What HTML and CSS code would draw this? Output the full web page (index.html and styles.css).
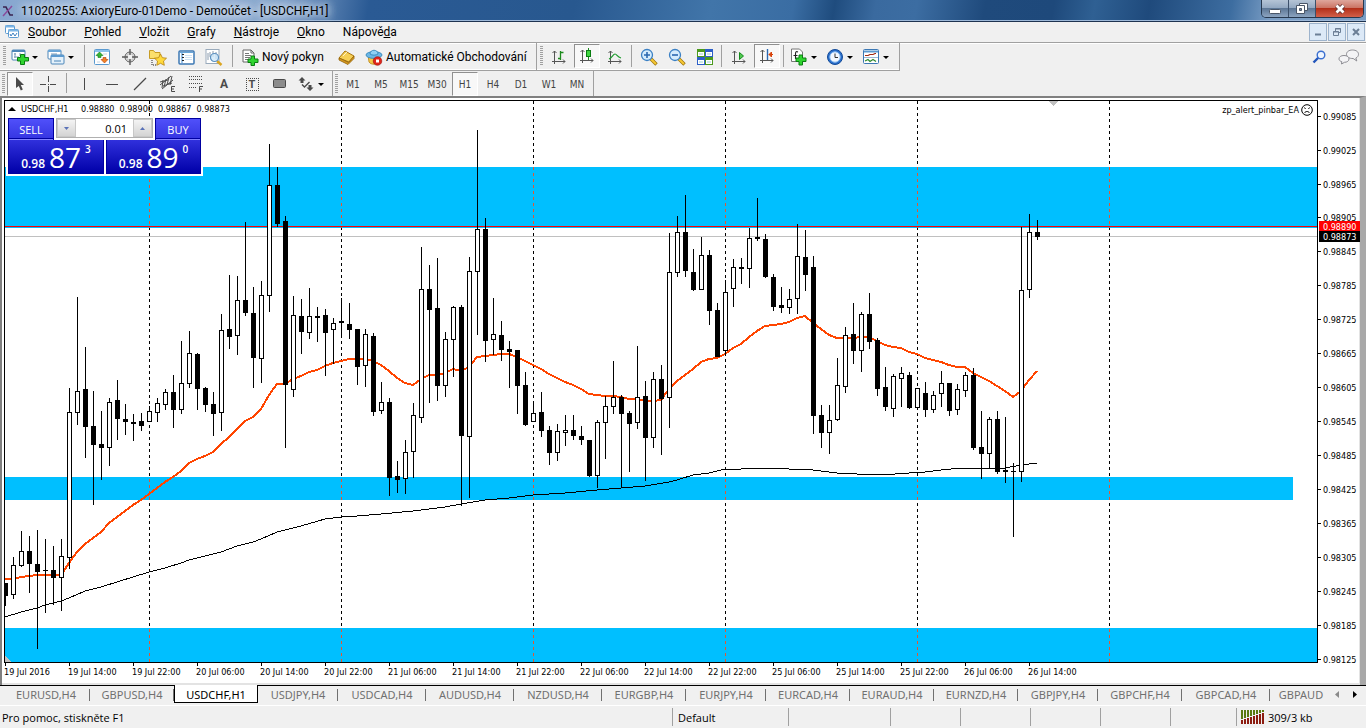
FILE: index.html
```
<!DOCTYPE html>
<html lang="cs">
<head>
    <meta charset="UTF-8">
    <meta name="viewport" content="width=device-width, initial-scale=1.0">
    <title>11020255: AxioryEuro-01Demo - Demoúčet - [USDCHF,H1]</title>
    <link rel="stylesheet" href="styles.css">
</head>
<body>
    <header class="title-bar">
        <svg class="app-logo" width="12" height="12" viewBox="0 0 12 12"><path d="M1 2h3l4 8h3" fill="none" stroke="#3a2350" stroke-width="1.6"/><path d="M10 1L1 11" stroke="#8a4a9a" stroke-width="1.4"/></svg>
        <h1>11020255: AxioryEuro-01Demo - Demoúčet - [USDCHF,H1]</h1>
        <div class="window-buttons">
            <button class="win-min" aria-label="Minimalizovat"><svg width="14" height="12" viewBox="0 0 14 12"><rect x="1.5" y="6.5" width="11" height="4" rx="1" fill="#fff" stroke="#4a5668"/></svg></button>
            <button class="win-max" aria-label="Obnovit"><svg width="14" height="13" viewBox="0 0 14 13"><path d="M4.5 1.5h8v7h-8z" fill="#fff" stroke="#4a5668"/><path d="M1.5 3.5h8v8h-8z" fill="#fff" stroke="#4a5668"/><path d="M4.5 6.5h2v2h-2z" fill="#7c8ea6" stroke="#4a5668"/></svg></button>
            <button class="win-close" aria-label="Zavřít"><svg width="14" height="12" viewBox="0 0 14 12"><path d="M3.5 2.5l7 7M10.5 2.5l-7 7" stroke="#5c3030" stroke-width="4.4"/><path d="M3.5 2.5l7 7M10.5 2.5l-7 7" stroke="#fff" stroke-width="2.8"/></svg></button>
        </div>
    </header>

    <nav class="menu-bar">
        <svg width="16" height="16" viewBox="0 0 16 16"><g fill="#fff" stroke="#5b9ad0"><rect x="1.5" y="1.5" width="9" height="8" rx="1"/><rect x="4.5" y="5.5" width="10" height="8" rx="1"/></g><path d="M1 2.5h9M4 6.500h10" stroke="#7ab4e4" stroke-width="2"/><path d="M6 10l1 2 2-3 2 3 2-3" fill="none" stroke="#3c7fc0"/></svg>
        <a href="#"><u>S</u>oubor</a>
        <a href="#"><u>P</u>ohled</a>
        <a href="#"><u>V</u>ložit</a>
        <a href="#"><u>G</u>rafy</a>
        <a href="#"><u>N</u>ástroje</a>
        <a href="#"><u>O</u>kno</a>
        <a href="#">Nápově<u>d</u>a</a>
        <div class="child-buttons">
            <button aria-label="Minimalizovat graf"><svg width="12" height="12"><path d="M3 8.500h6" stroke="#6c7f96" stroke-width="2"/></svg></button>
            <button aria-label="Obnovit graf"><svg width="12" height="12" fill="none" stroke="#6c7f96"><path d="M4.500 5V2.500h5v4H7M4 3h6M2.500 5.500h5v4h-5zM2 6h6"/></svg></button>
            <button aria-label="Zavřít graf"><svg width="12" height="12"><path d="M3 3l6 6M9 3l-6 6" stroke="#6c7f96" stroke-width="2"/></svg></button>
        </div>
    </nav>

    <div class="toolbar-row">
        <div class="toolbar">
            <span class="grip"></span>
            <button class="tool drop" aria-label="Nový graf"><svg width="18" height="16" viewBox="0 0 18 16"><rect x="1" y="1" width="13" height="10" rx="1" fill="#fff" stroke="#4d86b8"/><path d="M1 2h13" stroke="#4d86b8" stroke-width="2"/><path d="M4 4v5M3 5h2M9 4v3M3 8h5" stroke="#7a9bb8"/><path d="M9.500 8.500V5.500h4v3h4v3.500h-4v3.500h-4V12h-3V8.500z" fill="#2fd42f" stroke="#0a7d12"/></svg></button>
            <button class="tool drop" aria-label="Profily"><svg width="18" height="16" viewBox="0 0 18 16"><rect x="1" y="1" width="13" height="9" rx="1" fill="#fff" stroke="#4d86b8"/><path d="M1 2h13" stroke="#6aa6d8" stroke-width="2"/><path d="M4 5h6M4 7h5" stroke="#7a9bb8"/><rect x="4" y="6" width="13" height="9" rx="1" fill="#e4f1fb" stroke="#4d86b8"/><path d="M4 7h13" stroke="#5b9ad0" stroke-width="2"/><path d="M7 12h7" stroke="#4d86b8"/></svg></button>
            <span class="sep"></span>
            <button class="tool" aria-label="Sledování trhu"><svg width="16" height="16" viewBox="0 0 16 16"><rect x="0.5" y="0.5" width="15" height="15" rx="1" fill="#fff" stroke="#5b9ad0"/><path d="M1 2h14" stroke="#8cc3ec" stroke-width="2"/><path d="M3 7h3M9 5h4M3 13h3" stroke="#c8d4e0"/><path d="M5.500 3L9 6.500H7v2H4v-2H2z" fill="#35b535" stroke="#137a18" stroke-width=".6"/><path d="M10.500 14L14 10.500h-2v-2H9v2H7z" fill="#f08428" stroke="#b33a08" stroke-width=".6"/></svg></button>
            <button class="tool" aria-label="Okno dat"><svg width="16" height="16" viewBox="0 0 16 16" fill="none" stroke="#5a5a5a"><circle cx="8" cy="8" r="5"/><circle cx="8" cy="8" r="3.5" stroke="#bbb"/><path d="M8 0v6M8 10v6M0 8h6M10 8h6" stroke-width="1.4"/></svg></button>
            <button class="tool" aria-label="Navigátor"><svg width="18" height="17" viewBox="0 0 18 17"><path d="M0.500 1.500h4l1.500 2h5v6h-10.500z" fill="#fbdf6c" stroke="#c79c24"/><path d="M3 11v5h4" fill="none" stroke="#222" stroke-dasharray="1 1"/><path d="M11.500 5l1.900 3.700 4.100.5-3 2.900.8 4.200-3.800-2-3.700 2 .7-4.200-3-2.900 4.100-.5z" fill="#ffd93b" stroke="#b5800b" stroke-width=".8"/></svg></button>
            <button class="tool" aria-label="Terminál"><svg width="17" height="15" viewBox="0 0 17 15"><rect x="1" y="1" width="15" height="13" rx="1" fill="#fff" stroke="#3c78b4" stroke-width="1.5"/><path d="M2 2.500h13" stroke="#6aa6d8"/><path d="M4 3v10" stroke="#9cc4ea" stroke-width="2"/><path d="M7 5.500h7M7 7.500h7M7 9.500h7" stroke="#cfe2f4"/><path d="M4 4.500h2M4 7.500h2M4 10.500h2" stroke="#222"/></svg></button>
            <button class="tool" aria-label="Tester strategií"><svg width="18" height="17" viewBox="0 0 18 17"><rect x="1" y="0.5" width="13" height="14" fill="#fff" stroke="#9ab"/><path d="M3 4v7M5 3v5M8 2v6M11 3v7" stroke="#8a9aac"/><path d="M12 12l4.500 4" stroke="#dba520" stroke-width="2.4"/><circle cx="9.5" cy="8.5" r="4" fill="#cfe8fa" fill-opacity=".8" stroke="#5b90c0" stroke-width="1.2"/></svg></button>
            <span class="sep"></span>
            <button class="tool text order"><svg width="17" height="17" viewBox="0 0 17 17"><path d="M1 1h8l3 3v9H1z" fill="#fff" stroke="#666"/><path d="M9 1v3h3" fill="none" stroke="#666"/><path d="M3 4.500h4M3 6.500h6M3 8.500h5M3 10.500h3" stroke="#777"/><path d="M9 10V7h3.500v3H16v3.500h-3.500V16.500H9v-3H6V10z" fill="#2fd42f" stroke="#0a7d12"/></svg>Nový pokyn</button>
            <button class="tool" aria-label="MetaEditor"><svg width="17" height="15" viewBox="0 0 17 15"><path d="M1 8l6-7 9 5-5 6z" fill="#f6cf55" stroke="#a8750c"/><path d="M1 8v2l9 4.500 6-6V6l-5.500 6.500z" fill="#dc9c1c" stroke="#8f5f08" stroke-width=".8"/><path d="M5 6l4-4" stroke="#fff" stroke-opacity=".7"/></svg></button>
            <button class="tool text auto"><svg width="18" height="17" viewBox="0 0 18 17"><path d="M3 6l1 7c2 3 8 3 10 0l1-6z" fill="#f3c749" stroke="#b98212" stroke-width=".8"/><ellipse cx="9" cy="6" rx="8" ry="3.4" fill="#6bb7e6" stroke="#2b7fb5" stroke-width=".8"/><path d="M5 5c0-5 8-5 8 0-2 1.500-6 1.500-8 0z" fill="#8fd0f4" stroke="#2b7fb5" stroke-width=".8"/><circle cx="12.5" cy="12" r="4.3" fill="#e0251b" stroke="#9c0e08" stroke-width=".6"/><rect x="11" y="10.5" width="3" height="3" fill="#fff"/></svg>Automatické Obchodování</button>
        </div>
        <div class="toolbar chart-tools">
            <span class="grip"></span>
            <button class="tool" aria-label="Sloupcový graf"><svg width="16" height="16" viewBox="0 0 16 16" fill="none" stroke="#555"><path d="M3.500 15V2M1.500 4l2-2 2 2M1 12.500h13M12 10.500l2 2-2 2"/><path d="M9.500 2v9M9 9.500H7M10 3.500h2.500" stroke="#1c8a1c" stroke-width="1.3"/></svg></button>
            <button class="tool on" aria-label="Svíčkový graf"><svg width="16" height="16" viewBox="0 0 16 16" fill="none" stroke="#555"><path d="M3.500 15V2M1.500 4l2-2 2 2M1 12.500h13M12 10.500l2 2-2 2"/><path d="M9.500 0v12" stroke="#1c8a1c"/><rect x="7.5" y="2.5" width="4" height="6" fill="#3fd63f" stroke="#0a7d12"/></svg></button>
            <button class="tool" aria-label="Čárový graf"><svg width="16" height="16" viewBox="0 0 16 16" fill="none" stroke="#555"><path d="M3.500 15V2M1.500 4l2-2 2 2M1 12.500h13M12 10.500l2 2-2 2"/><path d="M2 10c3-1 4-5 6-5 2 0 2 3 6 4" stroke="#1c9a2c" stroke-width="1.2"/></svg></button>
            <span class="sep"></span>
            <button class="tool" aria-label="Přiblížit"><svg width="18" height="18" viewBox="0 0 18 18"><path d="M10.500 10.500l6 6" stroke="#9a7410" stroke-width="3.4"/><path d="M11 11l5 5" stroke="#f7c832" stroke-width="2"/><circle cx="7" cy="7" r="5.5" fill="#d4ecfd" stroke="#3b80c4" stroke-width="1.3"/><path d="M4 7h6M7 4v6" stroke="#2a68b0" stroke-width="1.6"/></svg></button>
            <button class="tool" aria-label="Oddálit"><svg width="18" height="18" viewBox="0 0 18 18"><path d="M10.500 10.500l6 6" stroke="#9a7410" stroke-width="3.4"/><path d="M11 11l5 5" stroke="#f7c832" stroke-width="2"/><circle cx="7" cy="7" r="5.5" fill="#d4ecfd" stroke="#3b80c4" stroke-width="1.3"/><path d="M4 7h6" stroke="#2a68b0" stroke-width="1.6"/></svg></button>
            <button class="tool" aria-label="Dlaždice"><svg width="16" height="16" viewBox="0 0 16 16"><path d="M0 0h8v8H0zM8 8h8v8H8z" fill="#4a9a1c"/><path d="M8 0h8v8H8zM0 8h8v8H0z" fill="#2c5fc8"/><path d="M1 3h6v4H1zM9 3h6v4H9zM1 11h6v4H1zM9 11h6v4H9z" fill="#fff"/><path d="M2 5h4M10 5h4M2 13h4M10 13h4" stroke="#9cc"/></svg></button>
            <span class="sep"></span>
            <button class="tool" aria-label="Automatický posun"><svg width="16" height="16" viewBox="0 0 16 16" fill="none" stroke="#555"><path d="M3.500 15V2M1.500 4l2-2 2 2M1 12.500h13M12 10.500l2 2-2 2"/><path d="M8.500 3.500v7l4-3.500z" fill="#4fc94f" stroke="#158a1c"/></svg></button>
            <button class="tool on" aria-label="Posun grafu"><svg width="16" height="16" viewBox="0 0 16 16" fill="none" stroke="#555"><path d="M3.500 15V2M1.500 4l2-2 2 2M1 12.500h13M12 10.500l2 2-2 2"/><path d="M8.500 1v11" stroke="#2a68b0" stroke-width="1.4"/><path d="M14 6.500h-4M12.500 4l-2.500 2.500 2.500 2.500z" fill="#d8440c" stroke="#d8440c"/></svg></button>
            <span class="sep"></span>
            <button class="tool drop" aria-label="Indikátory"><svg width="18" height="18" viewBox="0 0 18 18"><path d="M1.500 1h8l3 3v9.500h-11z" fill="#fff" stroke="#777"/><path d="M8 4c-2-1-2.500 0-2.500 2v5M3.500 7.500h4" fill="none" stroke="#222" stroke-width="1.1"/><path d="M9 10V7h3.500v3H16v3.500h-3.500V17H9v-3.500H6V10z" fill="#2fd42f" stroke="#0a7d12"/></svg></button>
            <button class="tool drop" aria-label="Periody"><svg width="18" height="18" viewBox="0 0 18 18"><circle cx="9" cy="9" r="7.5" fill="#2a6fcc" stroke="#124a98"/><circle cx="9" cy="9" r="5.2" fill="#f2f8ff" stroke="#8bbcf0"/><path d="M9 5.500v4h3" fill="none" stroke="#333"/></svg></button>
            <button class="tool drop" aria-label="Šablony"><svg width="18" height="16" viewBox="0 0 18 16"><rect x="1.5" y="0.5" width="15" height="14" rx="1" fill="#fff" stroke="#3c78b4"/><path d="M2 2.500h14" stroke="#5b9ad0" stroke-width="2"/><path d="M2 8.500h14" stroke="#9ab8d4"/><path d="M3 6.500h3l2-1h3l2-1h1" fill="none" stroke="#a02810" stroke-width="1.2"/><path d="M3 12l3-1.500 2 2 3-2 3 2" fill="none" stroke="#2f8a2f" stroke-width="1.2"/></svg></button>
        </div>
        <div class="toolbar-right">
            <button class="tool" aria-label="Hledat"><svg width="14" height="14" viewBox="0 0 14 14"><path d="M6.500 7.500l-5 5" stroke="#2255bb" stroke-width="2.4"/><circle cx="9" cy="5" r="3.8" fill="#eef5ff" stroke="#3a6fd0" stroke-width="1.4"/></svg></button>
            <button class="tool" aria-label="Zprávy"><svg width="22" height="16" viewBox="0 0 22 16" fill="#f4f4f6" stroke="#8c8c92"><path d="M14.500 1c3.500 0 6 1.700 6 4.300 0 1.700-1 3-2.700 3.700l1 3-3.600-2.500c-4 .2-6.700-1.700-6.700-4.200C8.500 2.700 11 1 14.500 1z"/><path d="M6 6.500c3 0 5 1.300 5 3.400S9 13.300 6.500 13.300L3.500 15l.3-2.300C2 12.200 1 11.200 1 9.900c0-2.100 2-3.400 5-3.400z"/></svg></button>
        </div>
    </div>

    <div class="toolbar-row second">
        <div class="toolbar">
            <span class="grip"></span>
            <button class="tool on" aria-label="Kurzor"><svg width="14" height="16" viewBox="0 0 14 16"><path d="M3 1l8 8H7.800l2 4.600-2 .9-2-4.500L3 12z" fill="#4a4a4a"/></svg></button>
            <button class="tool" aria-label="Nitkový kříž"><svg width="16" height="16" stroke="#4a4a4a"><path d="M8.500 0v6M8.500 10v6M0 8.500h6M10 8.500h6"/><path d="M8 8.500h1"/></svg></button>
            <span class="sep"></span>
            <button class="tool" aria-label="Svislá čára"><svg width="16" height="16"><path d="M8.500 2v12" stroke="#4a4a4a"/></svg></button>
            <button class="tool" aria-label="Vodorovná čára"><svg width="16" height="16"><path d="M2 8.500h12" stroke="#4a4a4a"/></svg></button>
            <button class="tool" aria-label="Trendová čára"><svg width="16" height="16"><path d="M2 14L14 2" stroke="#4a4a4a" stroke-width="1.2"/></svg></button>
            <button class="tool" aria-label="Kanál"><svg width="18" height="18" viewBox="0 0 18 18" fill="none" stroke="#4a4a4a"><path d="M1 10L12 1M3 14l11-9M4 5l-1 8M7 4L5 12M10 2L8 10M13 1l-2 9M1 7l8-2M4 11l9-3"/><path d="M16 11.500h-3.500v5H16M12.500 14H15"/></svg></button>
            <button class="tool" aria-label="Fibonacci"><svg width="18" height="18" viewBox="0 0 18 18" fill="none" stroke="#4a4a4a"><path d="M2 1.500h14M2 4.500h14M2 8.500h14M2 12.500h8" stroke-dasharray="1 1"/><path d="M16 11.500h-3.500v5.500M12.500 14H15"/></svg></button>
            <button class="tool letter">A</button>
            <button class="tool letter"><span class="label-box">T</span></button>
            <button class="tool" aria-label="Obdélník"><svg width="16" height="16"><rect x="1.5" y="3.5" width="12" height="8" rx="1" fill="#8c8c8c" stroke="#4a4a4a"/></svg></button>
            <button class="tool drop" aria-label="Šipky"><svg width="18" height="16" viewBox="0 0 18 16" fill="#4a4a4a"><path d="M5 1l3.500 3.500h-2V7h-3V4.500h-2zM13 15l-3.500-3.500h2V9h3v2.500h2z"/><path d="M5 8.500l2.500 2.500L12.500 6" fill="none" stroke="#4a4a4a" stroke-width="1.4"/></svg></button>
        </div>
        <div class="toolbar periods">
            <span class="grip"></span>
            <button class="tool">M1</button>
            <button class="tool">M5</button>
            <button class="tool">M15</button>
            <button class="tool">M30</button>
            <button class="tool on">H1</button>
            <button class="tool">H4</button>
            <button class="tool">D1</button>
            <button class="tool">W1</button>
            <button class="tool">MN</button>
        </div>
    </div>

    <main class="chart-window">
        <div class="plot">
            <svg id="plot" class="plot-svg"></svg>
            <div class="chart-info">
                <span class="marker"></span>
                <span class="symbol">USDCHF,H1</span>
                <span>0.98880</span>
                <span>0.98900</span>
                <span>0.98867</span>
                <span>0.98873</span>
            </div>
            <div class="expert">zp_alert_pinbar_EA
                <svg width="12" height="12" viewBox="0 0 12 12" fill="none" stroke="#000"><circle cx="6" cy="6" r="5.3"/><path d="M3.500 9c1-2 4-2 5 0M3.500 3.500l1 1.500M8.500 3.500l-1 1.500"/></svg>
            </div>
            <div class="trade-panel">
                <div class="trade-top">
                    <button class="side">SELL</button>
                    <div class="volume">
                        <button aria-label="Snížit objem"><svg width="5" height="3"><path d="M0 0h5L2.500 3z" fill="#5a72b8"/></svg></button>
                        <input type="text" value="0.01" aria-label="Objem">
                        <button aria-label="Zvýšit objem"><svg width="5" height="3"><path d="M0 3h5L2.500 0z" fill="#5a72b8"/></svg></button>
                    </div>
                    <button class="side">BUY</button>
                </div>
                <div class="trade-prices">
                    <button class="price"><span>0.98</span><b>87</b><sup>3</sup></button>
                    <button class="price"><span>0.98</span><b>89</b><sup>0</sup></button>
                </div>
            </div>
        </div>
        <svg id="priceAxis" class="price-axis"></svg>
        <svg id="timeAxis" class="time-axis"></svg>
    </main>

    <nav class="chart-tabs">
        <a class="tab wide" href="#">EURUSD,H4</a>
        <a class="tab" href="#">GBPUSD,H4</a>
        <a class="tab active" href="#">USDCHF,H1</a>
        <a class="tab narrow" href="#">USDJPY,H4</a>
        <a class="tab wide" href="#">USDCAD,H4</a>
        <a class="tab wide" href="#">AUDUSD,H4</a>
        <a class="tab wide" href="#">NZDUSD,H4</a>
        <a class="tab" href="#">EURGBP,H4</a>
        <a class="tab narrow" href="#">EURJPY,H4</a>
        <a class="tab" href="#">EURCAD,H4</a>
        <a class="tab" href="#">EURAUD,H4</a>
        <a class="tab" href="#">EURNZD,H4</a>
        <a class="tab narrow" href="#">GBPJPY,H4</a>
        <a class="tab" href="#">GBPCHF,H4</a>
        <a class="tab wide" href="#">GBPCAD,H4</a>
        <a class="tab last" href="#">GBPAUD</a>
        <span class="tab-scroll">
            <button aria-label="Předchozí záložky"><svg width="4" height="7"><path d="M4 0v7L0 3.500z" fill="#8a8a8a"/></svg></button>
            <button aria-label="Další záložky"><svg width="4" height="7"><path d="M0 0v7l4-3.500z" fill="#000"/></svg></button>
        </span>
    </nav>

    <footer class="status-bar">
        <span class="help">Pro pomoc, stiskněte F1</span>
        <span class="profile">Default</span>
        <span class="cell big"></span>
        <span class="cell"></span>
        <span class="cell"></span>
        <span class="cell"></span>
        <span class="cell"></span>
        <span class="cell"></span>
        <span class="traffic"><svg id="signal" width="24" height="14"></svg>309/3 kb</span>
    </footer>

    <script src="chart.js"></script>
</body>
</html>
```
FILE: styles.css
```
* {
    box-sizing: border-box;
}

body {
    margin: 0;
    min-height: 100vh;
    display: flex;
    flex-direction: column;
    background-color: #f0f0f0;
    color: #000;
    font-family: Roboto, "Noto Sans", sans-serif;
    font-size: 12px;
    overflow-x: hidden;
}

button {
    padding: 0;
    border: none;
    background: none;
    font: inherit;
    color: inherit;
}

a {
    color: inherit;
    text-decoration: none;
}

svg {
    display: block;
    flex: none;
}

/* Title bar */
.title-bar {
    display: flex;
    align-items: flex-start;
    height: 22px;
    padding-left: 2px;
    border-bottom: 1px solid #1e3350;
    box-shadow: inset 0 -1px #9db8d8;
    background: linear-gradient(100deg, #86a6cf 0%, #a4bddd 13%, #7f9fc8 21%, #2a5a94 27%, #28588f 42%, #4175a9 52%, #3a6da3 58%, #1f4c7e 61%, #3a6a9f 64%, #3c6da2 67%, #1f4a7c 72%, #1e497b 77%, #2f6093 80%, #1f4a7c 84%, #3d6da0 90%, #7a9dc4 93%);
}

.app-logo {
    margin-top: 5px;
}

.title-bar h1 {
    flex: 1;
    margin: 0 0 0 7px;
    font-size: 12px;
    font-weight: normal;
    line-height: 22px;
    white-space: nowrap;
    text-shadow: 0 0 8px #fff, 0 0 8px #dce8f6, 0 0 12px #b9cfe8;
}

.window-buttons {
    display: flex;
    height: 18px;
    margin-right: 2px;
    border: 1px solid #26384f;
    border-top: none;
    border-radius: 0 0 5px 5px;
    overflow: hidden;
}

.window-buttons button {
    display: flex;
    align-items: center;
    justify-content: center;
    width: 27px;
    border-right: 1px solid #3c506a;
    background: linear-gradient(#b5c4d6 0%, #94a9c2 45%, #5d7796 50%, #8ca4c0 100%);
}

.window-buttons .win-close {
    width: 47px;
    border-right: none;
    background: linear-gradient(#dfa79c 0%, #cb7565 45%, #b3301a 50%, #d2604a 100%);
}

/* Menu */
.menu-bar {
    display: flex;
    align-items: center;
    height: 21px;
    padding-left: 4px;
    border-bottom: 1px solid #a0a0a0;
    box-shadow: 0 1px #fff;
}

.menu-bar a {
    margin: 0 10px 0 8px;
    white-space: nowrap;
}

.child-buttons {
    display: flex;
    gap: 1px;
    margin-left: auto;
    margin-right: 1px;
}

.child-buttons button {
    display: flex;
    align-items: center;
    justify-content: center;
    width: 18px;
    height: 18px;
    border: 1px solid #9db3cc;
    background-color: #dce9f7;
}

/* Toolbars */
.toolbar-row {
    display: flex;
    height: 28px;
}

.toolbar-row.second {
    height: 25px;
}

.toolbar {
    display: flex;
    align-items: stretch;
    padding-top: 1px;
    padding-right: 4px;
    border-right: 1px solid #a0a0a0;
    border-bottom: 1px solid #a0a0a0;
    box-shadow: inset 0 -1px #fff;
}

.second .toolbar {
    padding-right: 2px;
    border-bottom: none;
    box-shadow: none;
}

.grip {
    flex: none;
    width: 3px;
    margin: 2px 2px 4px 3px;
    background: repeating-linear-gradient(#a0a0a0 0 1px, #f0f0f0 1px 2px);
}

.second .grip {
    margin: 2px 1px 3px 2px;
}

.tool {
    display: flex;
    align-items: center;
    justify-content: center;
    width: 28px;
    white-space: nowrap;
}

.tool.on {
    border: 1px solid #fff;
    border-top-color: #909090;
    border-left-color: #909090;
    background-color: #f8f8f8;
    width: 26px;
    margin: 0 1px;
}

.toolbar-row:not(.second) .tool.on {
    margin-bottom: 2px;
}

.tool.drop {
    justify-content: flex-start;
    width: 36px;
    gap: 3px;
    padding-left: 3px;
}

.tool.drop::after {
    content: "";
    border: 3px solid transparent;
    border-top-color: #000;
    border-bottom: none;
}

.tool.text {
    justify-content: flex-start;
    gap: 3px;
    padding-left: 6px;
}

.tool.order {
    width: 96px;
}

.tool.auto {
    width: 172px;
    padding-left: 5px;
}

.sep {
    flex: none;
    width: 1px;
    margin: 1px 3px 3px 4px;
    background-color: #a0a0a0;
}

.chart-tools .sep {
    margin-left: 2px;
}

.tool.letter {
    color: #4a4a4a;
    font-weight: bold;
    font-size: 12px;
}

.label-box {
    width: 13px;
    height: 13px;
    border: 1px dotted #4a4a4a;
    line-height: 11px;
    font-size: 11px;
}

.periods .tool {
    font-family: "DejaVu Sans Condensed", "DejaVu Sans", sans-serif;
    font-size: 10px;
    color: #444;
}

.toolbar-right {
    display: flex;
    gap: 2px;
    margin-left: auto;
    margin-right: 3px;
}

/* Chart window */
.chart-window {
    flex: 1;
    display: grid;
    grid-template-columns: 1fr 42px;
    grid-template-rows: 563px 1fr;
    padding: 2px 0 0 2px;
    border-style: solid;
    border-width: 2px 6px 0 2px;
    border-color: #808080 #a8a8a8 #808080 #808080;
    background-color: #fff;
    box-shadow: inset -1px -2px #e3e3e3;
    font-family: "DejaVu Sans Condensed", "DejaVu Sans", sans-serif;
    font-size: 9px;
}

.plot {
    position: relative;
    border: 1px solid #000;
    overflow: hidden;
}

.plot-svg {
    width: 100%;
    height: 100%;
}

.price-axis {
    width: 42px;
    height: 100%;
    overflow: visible;
}

.time-axis {
    grid-column: 1 / 3;
    width: 100%;
    height: 20px;
}

.chart-info {
    position: absolute;
    left: 3px;
    top: 1px;
    display: flex;
    align-items: center;
    gap: 5px;
    height: 14px;
    white-space: nowrap;
}

.symbol {
    width: 55px;
}

.marker {
    border: 4px solid transparent;
    border-bottom-color: #000;
    border-top: none;
}

.expert {
    position: absolute;
    right: 4px;
    top: 3px;
    display: flex;
    align-items: center;
    gap: 2px;
}

/* One click trading */
.trade-panel {
    position: absolute;
    left: 1px;
    top: 16px;
    padding: 1px 2px 2px;
    background-color: #fff;
    color: #fff;
    font-family: "Open Sans", "Noto Sans", sans-serif;
    font-size: 12px;
}

.trade-top {
    display: flex;
    justify-content: space-between;
    height: 22px;
}

.side {
    width: 46px;
    border: 1px solid #0000a0;
    border-bottom: none;
    background: linear-gradient(#5050fa, #3434e0);
    box-shadow: inset 0 -1px #8080ff, inset 0 -2px #0000a0;
    font-size: 11px;
}

.volume {
    display: flex;
    width: 97px;
    height: 20px;
    border: 1px solid #b0b0b0;
}

.volume button {
    display: flex;
    align-items: center;
    justify-content: center;
    width: 19px;
    border: 1px solid #c8c8c8;
    background: linear-gradient(#f4f4f4, #d4d4d4);
}

.volume input {
    flex: 1;
    min-width: 0;
    padding: 0 6px;
    border: none;
    font: inherit;
    font-size: 11px;
    text-align: right;
}

.trade-prices {
    display: flex;
    gap: 2px;
}

.price {
    display: flex;
    align-items: flex-end;
    justify-content: center;
    gap: 4px;
    width: 96px;
    height: 34px;
    border: 1px solid #0000a0;
    border-top: none;
    background: linear-gradient(#3030dc, #0000a8);
}

.price + .price {
    width: 95px;
}

.price span {
    font-weight: 600;
    line-height: 18px;
}

.price b {
    font-size: 28px;
    font-weight: normal;
    line-height: 32px;
}

.price sup {
    align-self: flex-start;
    font-weight: 600;
    line-height: 18px;
}

/* Chart tabs */
.chart-tabs {
    display: flex;
    height: 21px;
    padding-left: 2px;
    border-top: 1px solid #000;
    border-bottom: 1px solid #fff;
    color: #707070;
    font-family: "Noto Sans", sans-serif;
    font-size: 11px;
}

.tab {
    position: relative;
    flex: none;
    width: 84px;
    line-height: 18px;
    text-align: center;
}

.tab.wide {
    width: 88px;
}

.tab.narrow {
    width: 80px;
}

.tab::after {
    content: "";
    position: absolute;
    right: 0;
    top: 3px;
    width: 1px;
    height: 12px;
    background-color: #707070;
}

.tab.active {
    height: 18px;
    margin-top: -1px;
    border: 1px solid #000;
    border-top: none;
    background-color: #fff;
    color: #000;
    line-height: 20px;
}

.tab.active::after,
.tab.last::after {
    display: none;
}

.tab.last {
    width: 58px;
    padding-left: 4px;
}

.tab-scroll {
    display: flex;
    align-items: center;
    gap: 14px;
    margin: 0 9px 2px auto;
}

/* Status bar */
.status-bar {
    display: flex;
    height: 22px;
    line-height: 23px;
    font-family: "Open Sans", "Noto Sans", sans-serif;
    font-size: 11px;
    white-space: nowrap;
}

.status-bar span + span {
    background: linear-gradient(#a0a0a0, #a0a0a0) left center / 1px 18px no-repeat;
}

.help {
    flex: 1;
    padding-left: 2px;
}

.profile {
    width: 116px;
    padding-left: 6px;
}

.cell {
    width: 70px;
}

.cell.big {
    width: 102px;
}

.traffic {
    display: flex;
    align-items: center;
    gap: 3px;
    width: 130px;
    padding-left: 5px;
}

.cell:nth-last-child(2) {
    width: 66px;
}
```
FILE: chart.js
```
// Plot area origin: series values below are window coordinates
const ORIGIN_X = 5;
const ORIGIN_Y = 101;
const BAR_STEP = 8;
const BAND_COLOR = '#00bfff';

// [high, body top, body bottom, low, 1 = bullish / 0 = bearish]
const CANDLES = [
    [583,583,596,606,0], [557,565,595,599,1], [531,551,566,567,1], [536,551,564,593,0], [530,564,572,649,0],
    [539,570,571,613,0], [546,570,578,605,0], [539,556,578,611,1], [388,412,558,569,1], [297,391,413,425,1],
    [347,389,427,458,0], [391,426,445,505,0], [411,444,448,480,0], [398,402,448,466,1], [380,400,419,440,0],
    [404,419,422,435,0], [414,422,424,441,0], [413,421,426,431,0], [406,411,422,422,1], [398,403,413,422,1],
    [389,392,405,410,1], [375,392,410,428,0], [341,383,410,414,1], [331,353,384,388,1], [353,354,389,410,0],
    [387,388,405,412,0], [392,404,414,436,0], [314,330,413,431,1], [275,329,337,349,0], [276,300,336,355,1],
    [222,300,313,316,0], [287,313,358,388,0], [281,295,359,383,1], [144,185,296,312,1], [167,185,224,227,0],
    [216,221,385,448,0], [296,315,390,397,1], [299,316,332,354,0], [288,316,333,339,1], [307,316,318,342,0],
    [309,315,333,376,0], [318,323,330,364,1], [298,321,323,336,0], [303,324,330,339,0], [329,329,367,385,0],
    [329,334,366,387,1], [333,336,412,416,0], [382,402,411,414,1], [398,402,478,496,0], [461,476,480,493,0],
    [440,452,479,494,1], [403,415,452,478,1], [247,289,418,423,1], [265,289,310,403,0], [258,308,386,401,0],
    [332,339,386,397,1], [306,307,340,377,1], [305,307,436,506,0], [257,271,437,498,1], [130,229,272,335,1],
    [218,229,341,362,0], [298,334,340,355,1], [321,335,350,361,0], [341,349,352,388,0], [350,350,386,414,0],
    [372,385,425,426,0], [401,413,422,422,1], [392,412,431,437,0], [426,430,453,465,0], [424,431,453,461,1],
    [415,430,433,446,1], [415,430,436,440,0], [426,436,440,445,0], [440,440,476,477,0], [420,422,476,488,1],
    [396,406,423,459,1], [361,397,407,414,1], [395,397,414,488,0], [411,413,424,472,0], [346,397,423,429,1],
    [381,396,438,481,0], [372,379,438,448,1], [365,379,399,455,0], [233,272,398,428,1], [216,232,273,277,1],
    [195,232,271,277,0], [249,272,290,291,0], [237,255,290,290,1], [250,255,311,325,0], [303,310,357,357,0],
    [280,292,351,355,1], [259,267,289,307,1], [258,267,269,284,0], [228,238,269,288,1], [198,237,239,241,0],
    [234,239,277,278,0], [274,277,307,311,0], [287,305,308,313,0], [289,299,308,314,1], [224,256,299,314,1],
    [230,257,275,291,0], [256,267,416,434,0], [405,415,433,448,0], [405,420,433,454,1], [358,385,420,421,1],
    [327,335,387,393,1], [303,334,351,364,0], [312,314,351,372,1], [293,314,342,349,0], [338,340,389,396,0],
    [367,387,407,411,0], [374,376,409,417,1], [367,373,379,407,1], [372,375,408,409,0], [388,388,408,409,1],
    [382,393,410,417,0], [391,395,410,413,1], [371,383,394,407,1], [383,383,411,416,0], [384,389,410,415,1],
    [372,375,391,397,1], [368,375,448,450,0], [411,447,454,479,0], [417,419,454,468,1], [411,419,472,474,0],
    [417,470,472,483,0], [463,471,472,537,0], [227,290,472,482,1], [214,232,290,298,1], [220,232,237,240,0]
];

// Fast average, one value per bar
const FAST_MA = [
    579, 579, 577, 576, 575, 575, 575, 575, 563, 552, 544, 538, 532, 523, 517, 511, 505, 500, 494, 488,
    482, 477, 471, 463, 459, 456, 452, 444, 437, 429, 421, 417, 409, 395, 384, 384, 379, 376, 372, 370,
    366, 363, 361, 359, 359, 359, 361, 365, 371, 378, 383, 385, 379, 375, 375, 373, 369, 371, 367, 357,
    356, 355, 354, 354, 357, 361, 365, 369, 374, 378, 382, 385, 389, 394, 395, 396, 396, 397, 399, 399,
    401, 401, 400, 389, 381, 375, 369, 362, 359, 358, 354, 348, 344, 337, 331, 326, 325, 324, 322, 318,
    316, 323, 329, 335, 338, 338, 338, 337, 337, 341, 345, 347, 348, 352, 354, 358, 360, 362, 365, 367,
    367, 373, 377, 381, 386, 391, 397, 391, 380, 371
];

// Slow average as x,y pairs
const SLOW_MA = '5,617 21,612 37,608 45,605 61,601 69,598 85,591 101,587 117,582 133,577 149,572 165,568 ' +
    '181,563 189,560 205,556 221,552 237,546 253,542 261,539 277,532 285,530 301,526 325,519 341,517 357,516 ' +
    '381,514 413,511 429,509 445,507 461,504 485,500 509,498 533,495 565,493 597,490 621,488 645,486 669,482 ' +
    '677,480 693,475 709,473 721,470 741,469 757,468 777,468 789,469 805,469 821,471 837,473 857,474 895,474 ' +
    '909,473 925,472 941,470 961,468 1005,468 1021,465 1037,463';

const TIMES = ['19 Jul 2016', '19 Jul 14:00', '19 Jul 22:00', '20 Jul 06:00', '20 Jul 14:00', '20 Jul 22:00',
    '21 Jul 06:00', '21 Jul 14:00', '21 Jul 22:00', '22 Jul 06:00', '22 Jul 14:00', '22 Jul 22:00',
    '25 Jul 06:00', '25 Jul 14:00', '25 Jul 22:00', '26 Jul 06:00', '26 Jul 14:00'];

function rect(x, y, w, h, fill) {
    return `<rect x="${x}" y="${y}" width="${w}" height="${h}" fill="${fill}"/>`;
}

// Dashes keep the same phase whichever y the segment starts at
function dashed(x, from, to, color) {
    return `<path d="M${x + 0.5} ${from}V${to}" stroke="${color}" stroke-dasharray="3 3" stroke-dashoffset="${(from - ORIGIN_Y) % 6}"/>`;
}

function drawPlot() {
    let out = `<g transform="translate(${-ORIGIN_X} ${-ORIGIN_Y})" shape-rendering="crispEdges">`;
    out += rect(5, 167, '100%', 61, BAND_COLOR);
    out += rect(5, 477, 1288, 23, BAND_COLOR);
    out += rect(5, 628, '100%', 34, BAND_COLOR);

    for (let x = 149; x <= 1109; x += 192) {
        out += dashed(x, 101, 167, '#000') + dashed(x, 228, 477, '#000') + dashed(x, 500, 628, '#000');
        out += dashed(x, 167, 228, '#e8552e') + dashed(x, 477, 500, '#e8552e') + dashed(x, 628, 662, '#e8552e');
    }

    out += rect(5, 226, '100%', 1, '#ff0000');
    out += rect(5, 236, '100%', 1, '#c0c0c0');

    const fast = FAST_MA.map((y, i) => `${5 + i * BAR_STEP},${y}`).join(' ');
    out += `<polyline points="${fast}" fill="none" stroke="#ff4500" stroke-width="2"/>`;
    out += `<polyline points="${SLOW_MA}" fill="none" stroke="#000"/>`;

    CANDLES.forEach(([high, top, bottom, low, up], i) => {
        const x = 5 + i * BAR_STEP;
        out += rect(x, high, 1, low - high, '#000');
        out += rect(x - 2, top, 5, bottom - top, '#000');
        if (up) {
            out += rect(x - 1, top + 1, 3, bottom - top - 2, '#fff');
        }
    });

    out += '<path d="M1048 101h11l-5.500 5z" fill="#c0c0c0"/>';
    out += '<path d="M5 656v6h6z" fill="#c0c0c0"/></g>';
    document.getElementById('plot').innerHTML = out;
}

function drawPriceAxis() {
    let out = '';
    for (let i = 0; i < 17; i++) {
        const y = Math.floor(16.13 + i * 33.94);
        const price = (0.99085 - i * 0.0006).toFixed(5);
        out += rect(0, y, 3, 1, '#000') + `<text x="5" y="${y + 4}">${price}</text>`;
    }
    out += rect(1, 121, 41, 10, '#ff0000') + '<text x="5" y="130" fill="#fff">0.98890</text>';
    out += rect(1, 131, 41, 11, '#000') + '<text x="5" y="140" fill="#fff">0.98873</text>';
    document.getElementById('priceAxis').innerHTML = out;
}

function drawTimeAxis() {
    document.getElementById('timeAxis').innerHTML = TIMES.map((label, i) =>
        rect(1 + i * 64, 0, 1, 3, '#000') + `<text x="${i * 64}" y="12">${label}</text>`
    ).join('');
}

// Connection bars: green above, red below
function drawSignal() {
    let out = '';
    for (let i = 0; i < 8; i++) {
        const split = 9 - i;
        out += rect(i * 3, 0, 2, split, '#5a7a10') + rect(i * 3, split + 1, 2, 13 - split, '#8c1c10');
    }
    document.getElementById('signal').innerHTML = out;
}

drawPlot();
drawPriceAxis();
drawTimeAxis();
drawSignal();
```
